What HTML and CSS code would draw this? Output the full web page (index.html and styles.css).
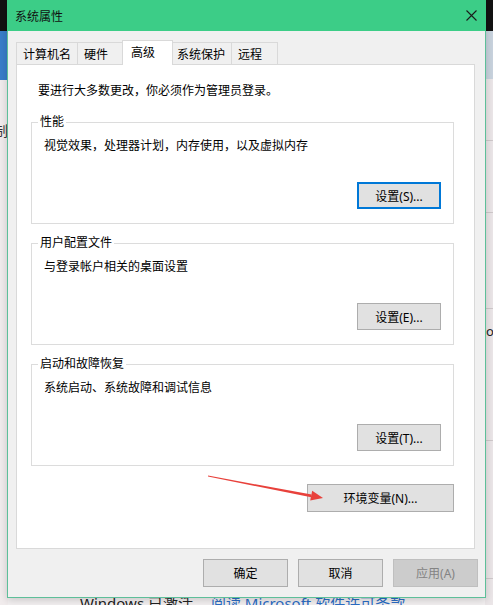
FILE: index.html
```html
<!DOCTYPE html>
<html>
<head>
    <meta charset="utf-8"/>
    <title>系统属性</title>
    <link rel="stylesheet" href="styles.css">
</head>
<body>
<div id="desktop">
    <div class="strip strip-left">
        <div class="strip-dark"></div>
        <div class="strip-blue"></div>
        <span class="strip-char">制</span>
    </div>
    <div class="strip strip-right">
        <div class="strip-dark"></div>
        <div class="strip-pale"></div>
        <div class="strip-line" style="top: 140px"></div>
        <div class="strip-line" style="top: 212px"></div>
        <div class="strip-line" style="top: 308px"></div>
        <div class="strip-line" style="top: 440px"></div>
        <div class="strip-line" style="top: 578px"></div>
        <span class="strip-char">o</span>
    </div>
    <div class="activation">
        Windows 已激活 <span class="link">阅读 Microsoft 软件许可条款</span>
    </div>

    <div id="window">
        <div id="titlebar">
            <span class="title">系统属性</span>
            <svg class="close" width="11" height="11" viewBox="0 0 11 11">
                <path d="M0.5 0.5 L10.5 10.5 M10.5 0.5 L0.5 10.5" stroke="#1b1b1b" stroke-width="1.1" fill="none"/>
            </svg>
        </div>
        <div id="body">
            <div id="tabs">
                <div class="tab">计算机名</div>
                <div class="tab">硬件</div>
                <div class="tab selected">高级</div>
                <div class="tab">系统保护</div>
                <div class="tab">远程</div>
            </div>
            <div id="panel">
                <p class="intro">要进行大多数更改，你必须作为管理员登录。</p>

                <fieldset class="group">
                    <legend>性能</legend>
                    <p class="desc">视觉效果，处理器计划，内存使用，以及虚拟内存</p>
                    <div class="row"><button class="btn default">设置(S)...</button></div>
                </fieldset>

                <fieldset class="group">
                    <legend>用户配置文件</legend>
                    <p class="desc">与登录帐户相关的桌面设置</p>
                    <div class="row"><button class="btn">设置(E)...</button></div>
                </fieldset>

                <fieldset class="group">
                    <legend>启动和故障恢复</legend>
                    <p class="desc">系统启动、系统故障和调试信息</p>
                    <div class="row"><button class="btn">设置(T)...</button></div>
                </fieldset>

                <div class="row env"><button class="btn wide">环境变量(N)...</button></div>
            </div>
            <div id="footer">
                <button class="btn">确定</button>
                <button class="btn">取消</button>
                <button class="btn" disabled>应用(A)</button>
            </div>
        </div>
    </div>

    <svg id="arrow" width="493" height="605" viewBox="0 0 493 605">
        <polygon points="208,475.6 311.6,494.6 311.2,497.2 208,476.6" fill="#e8413b"/>
        <polygon points="323,498 310.2,500.4 312.2,490.8" fill="#e8413b"/>
    </svg>
</div>
</body>
</html>
```

FILE: styles.css
```css
body, html {
    margin: 0px;
    padding: 0px;
}

body {
    font-family: 'Noto Sans', 'Noto Sans CJK SC', sans-serif;
    font-size: 12px;
    color: #000000;
}

#desktop {
    position: relative;
    width: 493px;
    height: 605px;
    overflow: hidden;
    background-color: #f3f0f1;
}

/* bits of the desktop showing round the dialog */
.strip {
    position: absolute;
    top: 0px;
    width: 8px;
    height: 605px;
    overflow: hidden;
}

.strip-left {
    left: 0px;
    background-color: #f1eced;
}

.strip-right {
    right: 0px;
    background-color: #ebe6e8;
}

.strip-dark {
    height: 31px;
    background-color: #121212;
}

.strip-left .strip-blue {
    height: 49px;
    background-color: #3a7dc9;
}

.strip-right .strip-pale {
    height: 48px;
    background-color: #c9d3de;
}

.strip-line {
    position: absolute;
    left: 0px;
    width: 8px;
    height: 1px;
    background-color: #cfc9cb;
}

.strip-left .strip-char {
    position: absolute;
    top: 120px;
    left: -6px;
    font-size: 14px;
    color: #333333;
}

.strip-right .strip-char {
    position: absolute;
    top: 322px;
    left: 1px;
    font-size: 13px;
    color: #222222;
}

.activation {
    position: absolute;
    left: 80px;
    top: 593px;
    font-size: 15px;
    line-height: 20px;
    color: #222222;
}

.activation .link {
    margin-left: 14px;
    color: #2b6cc4;
}

/* dialog */
#window {
    position: absolute;
    left: 7px;
    top: 0px;
    width: 479px;
    height: 598px;
    box-sizing: border-box;
    border: 1px solid #5dbf99;
    border-top: none;
    background-color: #f0f0f0;
    display: flex;
    flex-direction: column;
    box-shadow: 0px 2px 8px rgba(0, 0, 0, 0.18);
}

#titlebar {
    flex: 0 0 31px;
    display: flex;
    align-items: center;
    justify-content: space-between;
    background-color: #3ccd87;
    padding: 0px 9px 0px 8px;
    margin: 0px -1px;
}

.title {
    font-size: 12px;
    color: #111111;
}

#body {
    flex: 1;
    display: flex;
    flex-direction: column;
    padding: 9px 8px 10px 8px;
    min-height: 0px;
}

#tabs {
    display: flex;
    align-items: flex-end;
    height: 24px;
    position: relative;
    z-index: 1;
}

.tab {
    height: 22px;
    box-sizing: border-box;
    min-width: 47px;
    padding: 0px 6px;
    margin-left: -1px;
    display: flex;
    align-items: center;
    border: 1px solid #d9d9d9;
    border-bottom: none;
    background-color: #f0f0f0;
    white-space: nowrap;
}

.tab:first-child {
    margin-left: 0px;
}

.tab.selected {
    height: 25px;
    min-width: 51px;
    margin: 0px -2px -1px -2px;
    padding: 0px 8px 3px 8px;
    background-color: #ffffff;
    z-index: 2;
}

#panel {
    flex: 1;
    margin-right: 2px;
    background-color: #ffffff;
    border: 1px solid #d9d9d9;
    padding: 18px 20px 0px 14px;
    display: flex;
    flex-direction: column;
}

.intro {
    margin: 0px 0px 0px 7px;
    line-height: 16px;
}

.group {
    margin: 15px 0px 0px 0px;
    padding: 8px 12px 14px 12px;
    border: 1px solid #dcdcdc;
    min-width: 0px;
}

.group + .group {
    margin-top: 11px;
}

.group legend {
    margin-left: -6px;
    padding: 0px 2px;
    line-height: 16px;
}

.desc {
    margin: 0px;
    line-height: 16px;
}

.row {
    display: flex;
    justify-content: flex-end;
    margin-top: 28px;
}

.row.env {
    margin-top: 18px;
}

.btn {
    font-family: 'Noto Sans', 'Noto Sans CJK SC', sans-serif;
    font-size: 12px;
    color: #000000;
    width: 84px;
    height: 27px;
    padding: 0px;
    margin: 0px;
    background-color: #e1e1e1;
    border: 1px solid #adadad;
    box-sizing: border-box;
}

.btn.default {
    border: 2px solid #0078d7;
}

.btn.wide {
    width: 147px;
    height: 28px;
}

.btn:disabled {
    background-color: #cccccc;
    border-color: #bfbfbf;
    color: #838383;
}

#footer {
    display: flex;
    justify-content: flex-end;
    gap: 10px;
    padding-top: 10px;
    margin-right: -1px;
}

#footer .btn {
    width: 85px;
    height: 28px;
}

#arrow {
    position: absolute;
    left: 0px;
    top: 0px;
    pointer-events: none;
}
```
